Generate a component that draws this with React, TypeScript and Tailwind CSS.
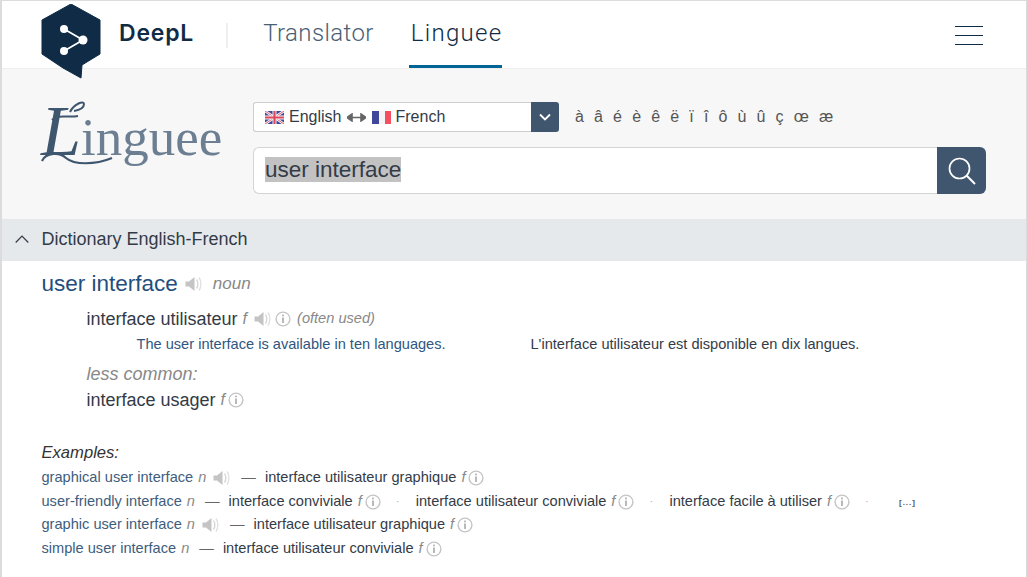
const sans = "font-['Liberation_Sans',Arial,sans-serif]";

function Speaker({ className = "" }: { className?: string }) {
  return (
    <svg viewBox="0 0 18 16" className={`w-[18px] h-4 shrink-0 ${className}`} fill="none">
      <path d="M0.5 5.5H4L9.5 1V15L4 10.5H0.5Z" fill="#c4c4c4" />
      <path d="M11.5 3.5C13 6 13 10 11.5 12.5" stroke="#d4d4d4" strokeWidth="1.3" />
      <path d="M14 1.5C16.5 5 16.5 11 14 14.5" stroke="#e0e0e0" strokeWidth="1.3" />
    </svg>
  );
}

function InfoIcon() {
  return (
    <svg viewBox="0 0 16 16" className="ml-[3px] w-4 h-4 shrink-0" fill="none">
      <circle cx="8" cy="8" r="6.9" stroke="#c4c4c4" strokeWidth="1.4" />
      <rect x="7.2" y="3.6" width="1.6" height="1.7" fill="#a8a8a8" />
      <rect x="7.2" y="6.5" width="1.6" height="5.5" fill="#a8a8a8" />
    </svg>
  );
}

function Gender({ v }: { v: string }) {
  return <em className="ml-[5px] text-[#888]">{v}</em>;
}

function UkFlag() {
  return (
    <svg viewBox="0 0 19 13" className="w-[19px] h-[13px]">
      <rect width="19" height="13" fill="#41479b" />
      <path d="M0 0L19 13M19 0L0 13" stroke="#f5f5f5" strokeWidth="2.6" />
      <path d="M0 0L19 13M19 0L0 13" stroke="#e0596b" strokeWidth="0.9" />
      <path d="M9.5 0V13M0 6.5H19" stroke="#f5f5f5" strokeWidth="4" />
      <path d="M9.5 0V13M0 6.5H19" stroke="#e0495b" strokeWidth="2.2" />
    </svg>
  );
}

function FrFlag() {
  return (
    <div className="flex w-[19px] h-[13px]">
      <div className="flex-1 bg-[#41479b]" />
      <div className="flex-1 bg-[#f5f5f5]" />
      <div className="flex-1 bg-[#f5505f]" />
    </div>
  );
}

function Dash() {
  return <span className="text-[#666] ml-[10px] mr-[9px]">—</span>;
}

function Dot() {
  return <span className="ml-[13px] mr-[14px] w-[8px] text-center text-[10px] text-[#aaa]">·</span>;
}

export default function App() {
  return (
    <div className={`${sans} w-[1027px] h-[577px] overflow-hidden bg-white border-t border-l-2 border-r border-[#dcdcdf] flex flex-col`}>
      <header className="h-[68px] shrink-0 flex pl-[39px] pr-[43px] border-b border-[#eeeeee]">
        <svg viewBox="0 0 60 75" className="w-[60px] h-[75px] mt-[3px] shrink-0 relative z-10">
          <path d="M30 0L59 16V50L41 61L40 74L22 64L1 50V16Z" fill="#0f2b46" stroke="#0f2b46" strokeLinejoin="round" />
          <path d="M23 25L42 36L23 47" stroke="#fff" strokeWidth="1.8" fill="none" />
          <circle cx="23" cy="25" r="4" fill="#fff" />
          <circle cx="42" cy="36" r="4.5" fill="#fff" />
          <circle cx="23" cy="47" r="4" fill="#fff" />
        </svg>
        <div className="ml-[18px] mt-[19px] h-[26px] text-[23px] leading-[26px] font-semibold tracking-[0.8px] text-[#0f2b46] font-['Inter',sans-serif]">DeepL</div>
        <div className="ml-[32px] mt-[22px] w-[2px] h-[25px] bg-[#f0f0f0]" />
        <div className="ml-[35px] mt-[17px] text-[24px] leading-[30px] font-light tracking-[0.4px] text-[#4a5f73] font-['Roboto',sans-serif]">Translator</div>
        <div className="ml-[35px] h-[67px] pt-[17px] pl-[2px] text-[24px] leading-[30px] font-light tracking-[1.3px] text-[#0f2b46] font-['Roboto',sans-serif] border-b-[3px] border-[#006494]">Linguee</div>
        <div className="ml-auto mt-[25px] w-[28px] flex flex-col gap-[8px]">
          <div className="h-px bg-[#0f2b46]" />
          <div className="h-px bg-[#0f2b46]" />
          <div className="h-px bg-[#0f2b46]" />
        </div>
      </header>

      <section className="h-[150px] shrink-0 bg-[#f7f7f7] flex">
        <div className="relative w-[251px] shrink-0 pl-[39px] pt-[26px] flex items-start font-['Liberation_Serif',serif] text-[#6c7f92]">
          <span className="italic text-[72px] leading-[72px] text-[#3f566f]">L</span>
          <span className="text-[53px] leading-[54px] mt-[15px]">inguee</span>
          <svg viewBox="2 69 120 100" className="absolute left-0 top-0 w-[120px] h-[100px]" fill="none">
            <path d="M42 161C46 152 60 152 66 158C74 165 95 165 112 158" stroke="#3f566f" strokeWidth="2.2" />
            <path d="M52 120C58 114 68 118 78 116" stroke="#3f566f" strokeWidth="2" />
            <path d="M70 112C74 104 84 100 84 104C84 108 80 110 74 111" stroke="#3f566f" strokeWidth="2" />
          </svg>
        </div>
        <div className="flex-1 pt-[33px] pr-[40px]">
          <div className="flex items-center h-[30px]">
            <div className="w-[278px] h-[30px] bg-white border border-[#cfcfcf] border-r-0 rounded-l-[3px] flex items-center pl-[11px] text-[16px] text-[#333b47]">
              <UkFlag />
              <span className="ml-[5px]">English</span>
              <svg viewBox="0 0 19 9" className="w-[19px] h-[9px] ml-[6px] mr-[6px]">
                <path d="M0 4.5L5 1V8ZM19 4.5L14 1V8ZM4 4.5H15" fill="#666" stroke="#666" strokeWidth="1.6" />
              </svg>
              <FrFlag />
              <span className="ml-[4px]">French</span>
            </div>
            <div className="w-[28px] h-[30px] bg-[#40566f] rounded-r-[3px] flex items-center justify-center">
              <svg viewBox="0 0 12 8" className="w-[12px] h-[8px]">
                <path d="M1 1.5L6 6.5L11 1.5" stroke="#fff" strokeWidth="1.8" fill="none" />
              </svg>
            </div>
            <div className="ml-[16px] text-[16px] text-[#555] flex gap-[10.15px]">
              {["à", "â", "é", "è", "ê", "ë", "ï", "î", "ô", "ù", "û", "ç", "œ", "æ"].map((c) => (
                <span key={c}>{c}</span>
              ))}
            </div>
          </div>
          <div className="flex mt-[15px] h-[47px]">
            <div className="flex-1 bg-white border border-[#d4d4d4] border-r-0 rounded-l-[6px] pl-[11px] pt-[9px]">
              <span className="block w-fit bg-[#c2c2c2] text-[22.5px] leading-[25px] text-[#333b47]">user interface</span>
            </div>
            <div className="w-[49px] bg-[#40566f] rounded-r-[6px] flex items-center justify-center">
              <svg viewBox="0 0 28 28" className="w-[28px] h-[28px]" fill="none">
                <circle cx="11.5" cy="11.5" r="10" stroke="#fff" strokeWidth="1.7" />
                <path d="M18.8 18.8L27 27" stroke="#fff" strokeWidth="2" />
              </svg>
            </div>
          </div>
        </div>
      </section>

      <div className="h-[42px] shrink-0 bg-[#e6e9ec] flex items-center pl-[13px] pb-[2px] text-[18px] text-[#333b47]">
        <svg viewBox="0 0 14 8" className="w-[14px] h-[8px] mr-[12.5px]">
          <path d="M0.7 7.5L7 1L13.3 7.5" stroke="#333b47" strokeWidth="1.2" fill="none" />
        </svg>
        Dictionary English-French
      </div>

      <main className="pl-[39.5px] text-[#333b47]">
        <div className="flex items-center h-[28px] mt-[9px] text-[22.5px]">
          <span className="text-[#1f4e7e]">user interface</span>
          <Speaker className="ml-[7px]" />
          <em className="ml-[10px] text-[17px] text-[#888]">noun</em>
        </div>
        <div className="pl-[45px] mt-[8px]">
          <div className="flex items-center h-[26px] text-[18px]">
            interface utilisateur
            <em className="ml-[5px] text-[16px] text-[#888]">f</em>
            <Speaker className="ml-[7px]" />
            <InfoIcon />
            <em className="ml-[6px] text-[14.6px] text-[#888]">(often used)</em>
          </div>
          <div className="flex h-[22px] mt-[2px] items-center pl-[50px] text-[14.6px]">
            <span className="w-[394px] text-[#2f5680]">The user interface is available in ten languages.</span>
            <span>L'interface utilisateur est disponible en dix langues.</span>
          </div>
          <em className="block mt-[5px] text-[18px] leading-[26px] text-[#888]">less common:</em>
          <div className="flex items-center h-[26px] text-[18px]">
            interface usager
            <em className="ml-[5px] text-[16px] text-[#888]">f</em>
            <InfoIcon />
          </div>
        </div>

        <em className="block mt-[28px] text-[16.6px] leading-[24px] text-[#333]">Examples:</em>
        <div className="text-[14.6px] mt-[1px]">
          <div className="flex items-center h-[24px]">
            <span className="text-[#3e5d7d]">graphical user interface</span>
            <Gender v="n" />
            <Speaker className="ml-[7px]" />
            <Dash />
            interface utilisateur graphique
            <Gender v="f" />
            <InfoIcon />
          </div>
          <div className="flex items-center h-[23px]">
            <span className="text-[#3e5d7d]">user-friendly interface</span>
            <Gender v="n" />
            <Dash />
            interface conviviale
            <Gender v="f" />
            <InfoIcon />
            <Dot />
            interface utilisateur conviviale
            <Gender v="f" />
            <InfoIcon />
            <Dot />
            interface facile à utiliser
            <Gender v="f" />
            <InfoIcon />
            <Dot />
            <span className="ml-[14px] mt-[3px] text-[8px] font-bold tracking-[1px] text-[#555]">[...]</span>
          </div>
          <div className="flex items-center h-[24px]">
            <span className="text-[#3e5d7d]">graphic user interface</span>
            <Gender v="n" />
            <Speaker className="ml-[7px]" />
            <Dash />
            interface utilisateur graphique
            <Gender v="f" />
            <InfoIcon />
          </div>
          <div className="flex items-center h-[24px]">
            <span className="text-[#3e5d7d]">simple user interface</span>
            <Gender v="n" />
            <Dash />
            interface utilisateur conviviale
            <Gender v="f" />
            <InfoIcon />
          </div>
        </div>
      </main>
    </div>
  );
}
